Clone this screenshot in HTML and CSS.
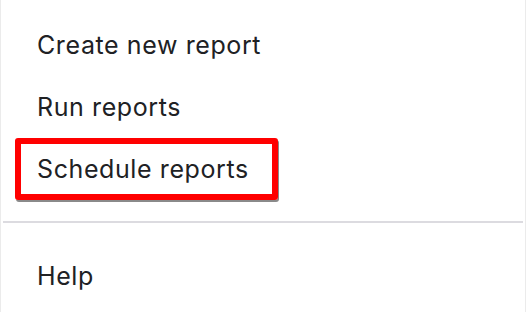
FILE: index.html
```html
<!DOCTYPE html>
<html lang="en">
<head>
    <meta charset="UTF-8">
    <meta name="viewport" content="width=device-width, initial-scale=1.0">
    <title>Reports menu</title>
    <link rel="stylesheet" href="styles.css">
</head>
<body>
    <div class="menu">
        <div class="menu-item">Create new report</div>
        <div class="menu-item">Run reports</div>
        <div class="menu-item highlighted">Schedule reports</div>
        <div class="divider"></div>
        <div class="menu-item">Help</div>
    </div>
</body>
</html>
```

FILE: styles.css
```css
* {
    box-sizing: border-box;
}
body {
    margin: 0;
    background-color: white;
    font-family: Inter, Roboto, "Liberation Sans", Arial, sans-serif;
}
.menu {
    width: 526px;
    height: 312px;
    padding-top: 14px;
    border-left: 1px solid #ebebeb;
    border-right: 1px solid #ebebeb;
}
.menu-item {
    margin-left: 14px;
    padding: 17px 22px;
    font-size: 25px;
    line-height: 28px;
    letter-spacing: 0.6px;
    color: #202124;
}
.highlighted {
    width: fit-content;
    padding: 11px 23px 11px 16px;
    border: 6px solid #ff0000;
    border-radius: 3px;
    box-shadow: 1px 2px 0 #8a8a8a;
}
.divider {
    height: 2px;
    margin: 21px 2px 22px 2px;
    background-color: #dcdbe0;
}
```
